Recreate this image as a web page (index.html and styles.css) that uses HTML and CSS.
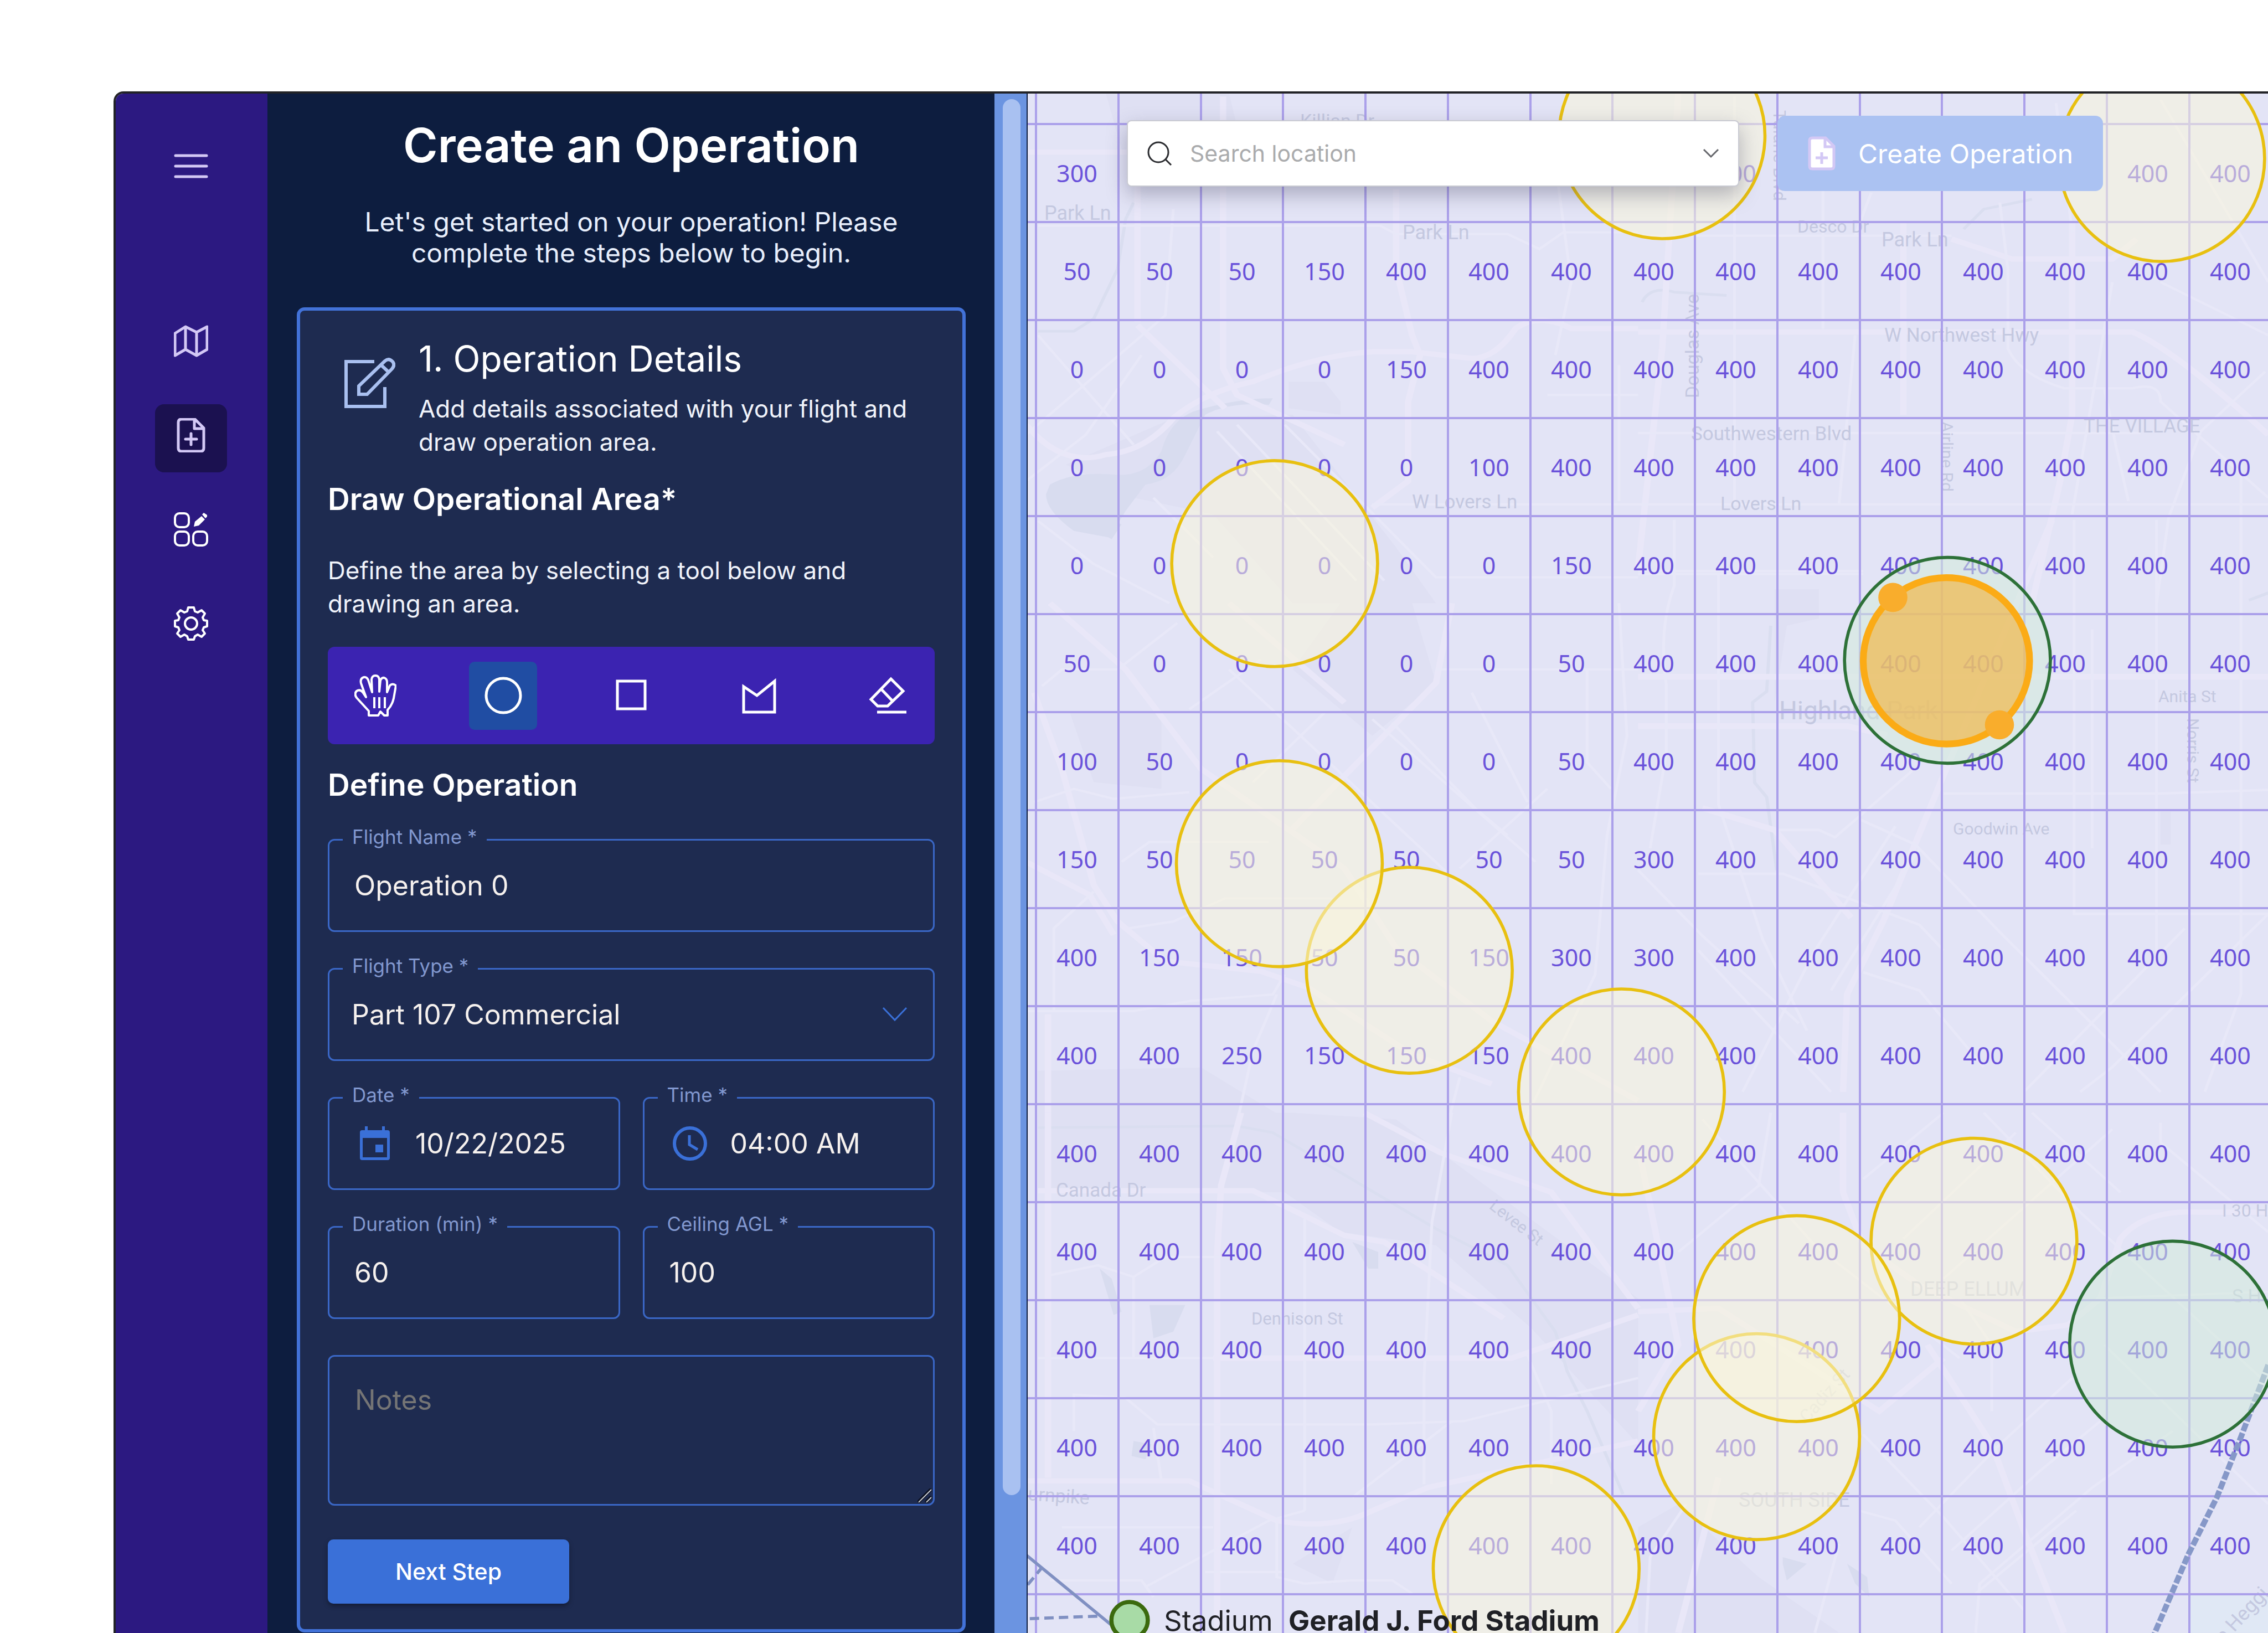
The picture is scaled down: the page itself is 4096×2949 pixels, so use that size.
FILE: index.html
```html
<!DOCTYPE html>
<html lang="en">
<head>
<meta charset="utf-8">
<title>Create an Operation</title>
<link rel="stylesheet" href="styles.css">
</head>
<body>
<div class="app">
  <nav class="sidebar" aria-label="Main">
    <button class="nav-item nav-menu" type="button" aria-label="Menu">
      <svg class="icon" viewBox="0 0 62 62"><path d="M3 12H59M3 31H59M3 50H59" stroke-width="5" stroke-linecap="round"/></svg>
    </button>
    <a class="nav-item" href="#map" aria-label="Map">
      <svg class="icon" viewBox="0 0 62 62"><path d="M2 17 21 5 41 15 60 5V46L41 57 21 46 2 57ZM21 5V46M41 15V57" stroke-width="5" stroke-linejoin="round"/></svg>
    </a>
    <a class="nav-item nav-active" href="#create" aria-label="Create operation">
      <svg class="icon" viewBox="0 0 62 62"><path d="M14 2H38L54 18V54Q54 60 48 60H14Q8 60 8 54V8Q8 2 14 2ZM37 3V19H53M31 28V48M21 38H41" stroke-width="5" stroke-linejoin="round" stroke-linecap="round"/></svg>
    </a>
    <a class="nav-item nav-bright" href="#dashboard" aria-label="Dashboard">
      <svg class="icon" viewBox="0 0 62 62"><g stroke-width="4"><rect x="2" y="2" width="25" height="25" rx="8"/><rect x="2" y="35" width="25" height="25" rx="8"/><rect x="35" y="35" width="25" height="25" rx="8"/></g><path class="solid" d="M36 26 38 17 50 7 56 13 45 24ZM51 4 54 1 60 5 60 8 57 11Z"/></svg>
    </a>
    <a class="nav-item nav-bright" href="#settings" aria-label="Settings">
      <svg class="icon" viewBox="0 0 62 62"><path d="M26 2H36L38 9 43 11 50 7 56 13 52 20 54 25 60 26V36L54 38 52 43 56 49 50 55 43 51 38 54 36 60H26L24 54 19 51 12 55 6 49 10 43 8 38 2 36V26L8 25 10 20 6 13 12 7 19 11 24 9Z" stroke-width="4" stroke-linejoin="round"/><circle cx="31" cy="31" r="11" stroke-width="4"/></svg>
    </a>
  </nav>

  <main class="panel">
    <h1 class="panel-title">Create an Operation</h1>
    <p class="panel-intro">Let's get started on your operation! Please<br>complete the steps below to begin.</p>

    <form class="card">
      <header class="step">
        <svg class="step-icon" viewBox="0 0 92 92"><path d="M54 7H3V88H73V53" stroke-width="6"/><path d="M26 66V51L73 6Q80 0 87 7 92 13 86 20L41 66ZM66 13 80 26" stroke-width="6"/></svg>
        <div>
          <h2 class="step-title">1. Operation Details</h2>
          <p class="text">Add details associated with your flight and draw operation area.</p>
        </div>
      </header>

      <h3 class="section-title">Draw Operational Area*</h3>
      <p class="text section-text">Define the area by selecting a tool below and drawing an area.</p>

      <div class="tools" role="toolbar" aria-label="Drawing tools">
        <button class="tool" type="button" aria-label="Pan">
          <svg viewBox="0 0 76 76"><path d="M26 74V66L4 42Q-1 35 4 30 10 26 15 32L21 41 12 16Q10 7 17 5 22 4 25 10L32 32 31 9Q32 2 38 2 44 2 45 9V31L47 11Q49 5 54 6 59 8 59 14V32L64 20Q69 15 75 20L71 43Q68 56 60 64V74H54L47 67 43 74ZM36 41V61M45 41V61M55 41V61" stroke-width="4" stroke-linejoin="round"/></svg>
        </button>
        <button class="tool tool-active" type="button" aria-label="Circle" aria-pressed="true">
          <svg viewBox="0 0 76 76"><circle cx="38" cy="38" r="31" stroke-width="5"/></svg>
        </button>
        <button class="tool" type="button" aria-label="Rectangle">
          <svg viewBox="0 0 76 76"><path d="M13 12H63V62H13Z" stroke-width="5"/></svg>
        </button>
        <button class="tool" type="button" aria-label="Polygon">
          <svg viewBox="0 0 76 76"><path d="M10 22V68H66V12L34 38Z" stroke-width="5"/></svg>
        </button>
        <button class="tool" type="button" aria-label="Erase">
          <svg viewBox="0 0 76 76"><path d="M44 8 66 30 38 57H20L8 45ZM26 26 47 48M19 68H72" stroke-width="5"/></svg>
        </button>
      </div>

      <h3 class="section-title">Define Operation</h3>

      <div class="fields">
        <div class="field wide">
          <label for="name">Flight Name *</label>
          <input id="name" type="text" value="Operation 0">
        </div>
        <div class="field wide">
          <label for="type">Flight Type *</label>
          <select id="type"><option>Part 107 Commercial</option></select>
          <svg class="field-arrow" viewBox="0 0 46 28"><path d="M2 2 23 24 44 2" stroke-width="3"/></svg>
        </div>
        <div class="field">
          <label for="date">Date *</label>
          <svg class="field-icon" viewBox="0 0 62 64"><path d="M8 8H54Q58 8 58 12V58Q58 62 54 62H8Q4 62 4 58V12Q4 8 8 8ZM9 22V57H53V22Z" fill-rule="evenodd" class="solid"/><path class="solid" d="M13 1H18V9H13ZM44 1H49V9H44ZM32 34H46V48H32Z"/></svg>
          <input id="date" type="text" value="10/22/2025">
        </div>
        <div class="field">
          <label for="time">Time *</label>
          <svg class="field-icon" viewBox="0 0 62 64"><circle cx="31" cy="32" r="28" stroke-width="6"/><path d="M30 17V34L45 43" stroke-width="5"/></svg>
          <input id="time" type="text" value="04:00 AM">
        </div>
        <div class="field">
          <label for="duration">Duration (min) *</label>
          <input id="duration" type="text" value="60">
        </div>
        <div class="field">
          <label for="ceiling">Ceiling AGL *</label>
          <input id="ceiling" type="text" value="100">
        </div>
        <div class="field notes wide">
          <textarea aria-label="Notes" placeholder="Notes"></textarea>
          <svg class="grip" viewBox="0 0 26 26"><path d="M1 25 25 1M15 25 25 15" stroke="#0b1020" stroke-width="6"/><path d="M2 25 25 2M16 25 25 16" stroke="#c9cbd2" stroke-width="2"/></svg>
        </div>
      </div>

      <button class="next" type="submit">Next Step</button>
    </form>
  </main>
  <div class="scroll-track"><div class="scroll-thumb"></div></div>

  <section class="map" aria-label="Airspace map">
    <svg class="map-canvas" viewBox="0 0 2240 2780" preserveAspectRatio="xMinYMin slice">
      <!-- Base map: parks, water and streets -->
      <g transform="scale(.939) translate(-1976 -180)">
        <g transform="translate(1950 160) scale(.7653 .6378)">
          <path class="park" d="M230 30H540L560 130 520 200H270ZM690 900H780L820 960V1000L690 980ZM130 1150 400 1010 700 1000 960 1400 1060 1568H700L500 1300 300 1250Z"/>
          <path class="water" d="M90 1210Q150 1170 250 1180 330 1190 370 1110 390 1020 450 990 560 950 650 950L640 970Q540 960 480 1000L430 1120Q400 1200 330 1210L280 1290 240 1370 150 1350Q80 1290 80 1240ZM220 1310 270 1330 245 1375 195 1340Z"/>
          <path class="water-line" d="M60 748H150L200 710 260 560 280 410 300 360"/>
          <path class="road major" d="M35 208H300L520 210M310 280V720M310 730 530 980M30 1030Q120 1160 230 1120 330 1110 400 1010 480 930 600 900 760 820 900 810H1000L1150 830Q1210 830 1260 740 1320 690 1400 740H1568M960 320V560L1000 760 1020 820 990 960V1200L900 1280M525 40V860L560 940 830 1090"/>
          <path class="road" d="M60 430H920L960 455H1240L1320 500 1380 450H1568M60 760 300 1090M400 380 380 700 30 1060M60 1320 200 1450 390 1568M680 1030 1060 1490H1568M900 1270H1568M1360 240 1400 600 1360 820M1340 940H1568M1520 850V1260M510 1050 860 1500M560 1030 930 1500M350 1250 500 1430M30 1200 180 1060 320 820"/>
        </g>
        <g transform="translate(3150 160) scale(.773 .6378)">
          <path class="water-line" d="M810 440 860 380 980 350M10 660Q30 610 90 630L220 640"/>
          <path class="road major" d="M100 30 60 800 0 1460M0 750H1230Q1330 800 1568 1060M1080 420V1000L1050 1200 980 1568M660 420V1000M780 470 930 530H1180L1240 470"/>
          <path class="road" d="M240 40V1270M460 160V740M0 460H780M0 1055H1250M0 1270H1568M0 1480H560M900 360 920 560V800Q950 880 1060 920H1230Q1300 900 1300 960L1568 1250M1300 600 1568 760M1560 870 1400 1050 1320 1310 1290 1568M1500 1150V1568M540 760 500 1270M1160 920 1190 1100 1220 1260M1180 600 1080 1300M1300 50 1568 600M1040 60 1080 450M580 330 540 460"/>
        </g>
        <g transform="translate(1950 1160) scale(.7653 .6378)">
          <path class="park" d="M60 1410 470 1400 700 1568H60ZM820 0 1000 0 1060 240 900 400 700 200ZM140 330H370V560L200 540Z"/>
          <path class="road major" d="M90 0 280 200 470 500 830 800 960 1040 1200 1260 1568 1500M50 270 120 500 200 850 260 960 380 1080 620 1110 740 1160 1000 1360 1200 1450M30 780 190 880 250 1000M1100 0 1060 240 880 460 700 680M85 1568V1240M830 300 540 0"/>
          <path class="road" d="M70 250 120 200H260L410 60M440 320 620 170M540 200 720 400 1130 860M270 780 340 720H640M290 980 400 960 530 890H800M30 1230H300L440 1200 650 1180 680 1120M900 350 1310 780M950 360 1160 620 1240 700M1060 200H1568M1440 200V480L1500 560M1150 270 1290 600M1520 0 1540 400 1490 700 1460 1120 1280 1568M1340 560 1120 800M780 330 600 540M660 1180 600 1350 560 1568M1090 1568 1120 1430M100 1230V980L200 870M50 600 150 560 250 590 440 570"/>
        </g>
        <g transform="translate(3150 1000) scale(.773 .7015)">
          <path class="park" d="M340 190H450V270L370 290 340 500ZM1300 800H1325V890H1300Z"/>
          <path class="water-line" d="M330 290 320 470 285 500 290 720 320 760 345 960M1520 220 1568 200"/>
          <path class="road major" d="M1030 0 760 700 610 1100 520 1300 510 1568M0 565H520L620 590M160 790 340 850 530 1090M0 430H1568"/>
          <path class="road" d="M90 0V180Q50 300 70 450V640L30 900M0 140H560M760 750H1300L1568 740M1085 0V1080H1568M1500 0V1300L1410 1568M1290 0V1200M200 150V780L310 1150 420 1400M550 820 690 890 900 1130 1300 1568M0 960 160 1140 400 1380M150 970H360L700 1110 760 1180M340 850H450L490 870 690 680M640 840 440 1180 260 1568M700 900 480 1290M1568 1080 1180 1500 1100 1568M1360 1120 960 1568M560 1240 700 1290 860 1500M150 1180 480 1568M1130 300V900"/>
        </g>
        <g transform="translate(1950 2140) scale(.7653 .6378)">
          <path class="park" d="M60 0H700L960 20 1568 560V1000L1300 650 1060 400 820 360 680 240 60 230ZM700 1360 850 1250 800 1420Z"/>
          <path class="water" d="M340 580H430L400 660 350 680ZM215 470 245 500 270 600 250 610ZM300 990 345 1000 330 1045 295 1035ZM850 390 915 420V470H890Z"/>
          <path class="water-line" d="M60 45 560 40 650 60 1060 350 1240 460 1360 660 1390 780 1440 900 1530 1150"/>
          <path class="road major" d="M85 0V1100M570 0 520 220 510 430V1568M60 235H600L830 370 930 390 1230 620M30 1110H440L660 1230Q800 1260 900 1200L1040 1130 1568 990M880 0 1070 120 1350 240 1568 590M1568 610 1250 740H500"/>
          <path class="road" d="M1100 0 1050 330 1030 800V1120M90 490 210 460 300 495 380 435H520M300 495V740M60 740H500M150 960V850L280 860 360 940H900L1130 930 1568 800M350 950 370 1110M730 320V1200M120 1250H500M90 1410H320L350 1460M660 1230V1400L730 1420 850 1410H950L1000 1450M330 1430 640 1230 730 1200M1040 860H1280M1290 730 1350 900V1120M1100 930 850 1160M480 1385H680"/>
        </g>
        <g transform="translate(3150 2140) scale(.773 .6378)">
          <path class="park" d="M0 1250 100 1180 300 1400 500 1568H0Z"/>
          <path class="water" d="M360 1340 420 1360 370 1410 360 1360ZM520 1360 570 1400 575 1460 540 1420Z"/>
          <path class="road major" d="M510 0V240L560 400 700 520 940 660 1070 640 1150 560 1200 380Q1260 290 1400 300H1568M0 600 200 590 600 900 760 740M720 700 880 1000 960 1260 1060 1568M200 1100 100 1568M0 100 100 700 0 900"/>
          <path class="road" d="M330 0 300 220 100 420M160 20 440 400 800 740M560 200 760 0M660 380 940 60M760 500 1180 50M860 0 1100 300 1568 820M1300 30V90L1568 360M980 0 1200 240M1140 560 1568 540M700 1250 900 1000 1080 800M780 1320 1000 1080 1150 930M840 1450 1090 1200M840 1568 850 1420 1130 1130 1330 960M560 970 760 1220 960 1500M1160 700 1568 1180M550 1200 640 1230 780 1420M500 1300 440 1568M880 900V700L800 560M20 1568 30 1340 120 1180"/>
          <path class="plot" d="M1371 1452H1568V1568H1371Z"/>
        </g>
      </g>

      <g id="labels"></g>
      <g id="grid"></g>

      <!-- Flight areas -->
      <g transform="scale(.939) translate(-1976 -180)">
        <path class="wire wavy" d="M4362 2625 4309 2765 4263 2880 4209 2988 4143 3142"/>
        <g class="advisory">
          <circle cx="2451" cy="1084" r="198"/>
          <circle cx="2710" cy="1866" r="198"/>
          <circle cx="2460" cy="1661" r="198"/>
          <circle cx="3118" cy="2100" r="198"/>
          <circle cx="3196" cy="261" r="198"/>
          <circle cx="4157" cy="305" r="198"/>
          <circle cx="3378" cy="2763" r="198"/>
          <circle cx="3796" cy="2387" r="198"/>
          <circle cx="3455" cy="2536" r="198"/>
          <circle cx="2954" cy="3017" r="198"/>
        </g>
        <path class="wire" d="M1970 2988 2150 3136"/>
        <path class="wire dashed" d="M1976 3048 2004 3014M1980 3113 2115 3108"/>
        <g class="approved">
          <circle cx="4178" cy="2585" r="198"/>
          <circle cx="3745" cy="1270" r="198"/>
        </g>
        <g class="drawing">
          <circle class="drawing-area" cx="3743" cy="1271" r="160"/>
          <circle class="handle" cx="3640" cy="1149" r="28"/>
          <circle class="handle" cx="3845" cy="1394" r="28"/>
        </g>
        <circle class="place" cx="2172" cy="3116" r="35"/>
      </g>
      <text class="place-kind" x="246" y="2776">Stadium</text>
      <text class="place-name" x="471" y="2776">Gerald J. Ford Stadium</text>
    </svg>

    <div class="map-bar">
      <label class="search">
        <svg class="search-icon" viewBox="0 0 46 46"><circle cx="21" cy="21" r="18" stroke-width="3"/><path d="M34 34 44 44" stroke-width="3"/></svg>
        <input type="text" aria-label="Search location" placeholder="Search location">
        <svg class="search-arrow" viewBox="0 0 30 18"><path d="M2 2 15 15 28 2" stroke-width="3"/></svg>
      </label>
      <button class="create" type="button">
        <svg class="create-icon" viewBox="0 0 50 62"><path d="M8 3H32L47 18V54Q47 59 42 59H8Q3 59 3 54V8Q3 3 8 3Z" fill="#fff" stroke-width="5"/><path d="M31 4V19H46M25 29V50M14 39H36" stroke-width="5"/></svg>
        Create Operation
      </button>
    </div>
  </section>
</div>
<script src="map.js"></script>
</body>
</html>
```
FILE: styles.css
```css
* { box-sizing: border-box; }

body {
  margin: 0;
  background: #fff;
  color: #fff;
  font-family: Inter, "Liberation Sans", sans-serif;
}

h1, h2, h3, p { margin: 0; }

button, input, select, textarea {
  font: inherit;
  color: inherit;
  border: 0;
  padding: 0;
  background: none;
}

svg { fill: none; stroke: currentColor; display: block; }
.solid { fill: currentColor; stroke: none; }

.app {
  display: flex;
  height: calc(100vh - 165px);
  margin: 165px 0 0 205px;
  border: 4px solid #222327;
  border-width: 4px 0 0 4px;
  border-radius: 18px 0 0 0;
  overflow: hidden;
}

/* Sidebar */
.sidebar {
  flex: 0 0 274px;
  display: flex;
  flex-direction: column;
  align-items: center;
  gap: 47px;
  padding: 75px 2px 0 0;
  background: #2c1981;
  color: #d3c8f5;
}
.nav-item {
  display: flex;
  align-items: center;
  justify-content: center;
  width: 130px;
  height: 123px;
  padding-bottom: 12px;
  border-radius: 16px;
  color: inherit;
}
.nav-menu { margin-bottom: 146px; }
.nav-active { background: #1b1150; }
.nav-bright { color: #fff; }
.icon { width: 62px; height: 62px; }

/* Panel */
.panel {
  flex: 0 0 1313px;
  min-width: 0;
  padding: 44px 52px 0 53px;
  background: #0d1d3f;
}
.panel-title {
  font-size: 85px;
  line-height: 100px;
  font-weight: 600;
  text-align: center;
}
.panel-intro {
  margin-top: 60px;
  font-size: 48px;
  line-height: 56px;
  text-align: center;
  color: #e8effc;
}
.card {
  margin-top: 70px;
  padding: 47px 50px 46px;
  border: 6px solid #4272d8;
  border-radius: 14px;
  background: #1e2b50;
}
.step { display: flex; gap: 42px; padding-left: 30px; }
.step-icon { flex: none; width: 92px; height: 92px; margin-top: 38px; color: #a9c0f0; }
.step-title { font-size: 64px; line-height: 80px; font-weight: 400; }
.text { font-size: 44px; line-height: 60px; color: #f0f3fa; }
.step .text { margin-top: 20px; }
.section-title { margin-top: 39px; font-size: 55px; line-height: 68px; font-weight: 600; }
.section-text { margin-top: 65px; }

.tools {
  display: flex;
  justify-content: space-between;
  align-items: center;
  height: 176px;
  margin-top: 48px;
  padding: 0 24px;
  border-radius: 12px;
  background: #3b23b1;
}
.tool {
  display: flex;
  align-items: center;
  justify-content: center;
  width: 123px;
  height: 123px;
  border-radius: 10px;
}
.tool svg { width: 76px; height: 76px; }
.tool-active { background: #204da3; }

.fields {
  display: grid;
  grid-template-columns: repeat(2, minmax(0, 1fr));
  gap: 65px 41px;
  margin-top: 64px;
}
.field {
  position: relative;
  display: flex;
  align-items: center;
  height: 168px;
  border: 3px solid #3a67c6;
  border-radius: 12px;
  color: #f6f1ee;
}
.wide { grid-column: 1 / -1; }
.field label {
  position: absolute;
  top: -27px;
  left: 24px;
  padding: 0 17px;
  background: #1e2b50;
  color: #8298cf;
  font-size: 35px;
  line-height: 40px;
}
.field input, .field select {
  flex: 1;
  min-width: 0;
  height: 100%;
  padding-left: 45px;
  font-size: 50px;
}
.field select { appearance: none; padding-left: 40px; }
.field-arrow { position: absolute; right: 46px; width: 46px; height: 28px; color: #3a70d8; pointer-events: none; }
.field-icon { flex: none; width: 62px; height: 64px; margin-left: 51px; color: #3a70d8; }
.field-icon + input { padding-left: 42px; }
.notes { height: 272px; }
.notes textarea {
  flex: 1;
  min-width: 0;
  height: 100%;
  padding: 48px 46px;
  font-size: 50px;
  line-height: 60px;
  resize: none;
}
.notes textarea::placeholder { color: #757575; }
.grip { position: absolute; right: 2px; bottom: 2px; width: 26px; height: 26px; }

.next {
  display: block;
  width: 436px;
  height: 116px;
  margin-top: 61px;
  border-radius: 10px;
  background: #3a70d8;
  box-shadow: 0 4px 8px rgba(0, 0, 0, .35);
  font-size: 41px;
  font-weight: 500;
}

.scroll-track {
  flex: 0 0 60px;
  padding: 10px 11px 0 15px;
  border-right: 2px solid #0d1d3f;
  background: #6b94e1;
}
.scroll-thumb { height: 91%; border-radius: 16px; background: #a9c1f1; }

/* Map */
.map { position: relative; flex: 1; min-width: 0; overflow: hidden; background: #e3e4f6; }
.map-canvas { position: absolute; inset: 0; width: 100%; height: 100%; }
.park { fill: #dfe0f3; stroke: none; }
.water { fill: #d8dcef; stroke: none; }
.plot { fill: #e0e8f5; stroke: none; }
.water-line { stroke: #dadef0; stroke-width: 8px; }
.road { stroke: #e8e8f8; stroke-width: 7px; }
.major { stroke: #e9e7f8; stroke-width: 16px; }
.street { fill: #c4c8e0; stroke: none; font-family: Roboto, sans-serif; }
.grid-line { stroke: #aba0ea; stroke-width: 4px; }
.limit {
  fill: #6a52da;
  stroke: none;
  font-family: "Noto Sans", sans-serif;
  font-size: 43px;
  text-anchor: middle;
}
.advisory { fill: rgba(249, 246, 219, .55); stroke: #e8c010; stroke-width: 6px; }
.approved { fill: rgba(212, 235, 219, .55); stroke: #2d7138; stroke-width: 6px; }
.drawing { fill: #f9ad2c; stroke: none; }
.drawing .drawing-area { fill: rgba(240, 186, 80, .72); stroke: #fbab16; stroke-width: 13px; }
.wire { stroke: #8090c2; stroke-width: 6px; }
.dashed { stroke-dasharray: 18 10; }
.wavy { stroke: #8698c8; stroke-width: 11px; stroke-dasharray: 16 4; }
.place { fill: #a8dba6; stroke: #3b6a0e; stroke-width: 8px; }
.place-kind, .place-name { fill: #1f2025; stroke: none; font-size: 51px; }
.place-name { font-weight: 700; }

.map-bar {
  position: absolute;
  top: 40px;
  left: 179px;
  display: flex;
  align-items: center;
  gap: 69px;
}
.search {
  display: flex;
  align-items: center;
  width: 1106px;
  height: 120px;
  padding: 0 34px;
  border: 2px solid #c9cad2;
  border-radius: 8px;
  background: #fff;
  box-shadow: 0 14px 36px rgba(60, 60, 90, .35);
  color: #2b2c30;
}
.search-icon { width: 46px; height: 46px; }
.search input { flex: 1; margin-left: 32px; font-size: 41px; }
.search input::placeholder { color: #aaabad; }
.search-arrow { width: 30px; height: 18px; color: #66676c; }
.create {
  display: flex;
  align-items: center;
  gap: 41px;
  width: 588px;
  height: 136px;
  padding-left: 55px;
  border-radius: 14px;
  background: #abc2f2;
  font-size: 48px;
  white-space: nowrap;
}
.create-icon { flex: none; width: 50px; height: 62px; stroke: #d3c8f5; }
```
FILE: map.js
```js
const NS = "http://www.w3.org/2000/svg";
const grid = document.getElementById("grid");
const labels = document.getElementById("labels");

function add(parent, tag, attrs, text) {
  const node = document.createElementNS(NS, tag);
  for (const key in attrs) node.setAttribute(key, attrs[key]);
  if (text !== undefined) node.textContent = text;
  parent.appendChild(node);
}

// Altitude limits in feet; cells left out of a row are 400
const limits = [
  [300], [50, 50, 50, 150], [0, 0, 0, 0, 150], [0, 0, 0, 0, 0, 100],
  [0, 0, 0, 0, 0, 0, 150], [50, 0, 0, 0, 0, 0, 50], [100, 50, 0, 0, 0, 0, 50],
  [150, 50, 50, 50, 50, 50, 50, 300], [400, 150, 150, 50, 50, 150, 300, 300],
  [400, 400, 250, 150, 150, 150], [], [], [], [], []
];
const cellWidth = 148.75, cellHeight = 177, left = 15, top0 = 55;

// Cells of the first row that lie behind the search box and the button
const covered = [1, 2, 3, 4, 5, 6, 7, 9, 10, 11, 12];

for (let c = 0; c < 15; c++) {
  const x = Math.round(left + c * cellWidth);
  add(grid, "path", { class: "grid-line", d: `M${x} 0V2780` });
}
for (let r = 0; r < 16; r++) {
  add(grid, "path", { class: "grid-line", d: `M0 ${top0 + r * cellHeight}H2240` });
}
limits.forEach((row, r) => {
  for (let c = 0; c < 15; c++) {
    if (r === 0 && covered.includes(c)) continue;
    const x = Math.round(left + (c + 0.5) * cellWidth);
    add(grid, "text", { class: "limit", x, y: top0 + r * cellHeight + 105 }, row[c] ?? 400);
  }
});

// text, x, y, size, rotation
[
  ["Park Ln", 30, 228, 36], ["Park Ln", 677, 263, 36], ["Killian Dr", 492, 61, 34],
  ["Desco Dr", 1390, 251, 32], ["Park Ln", 1542, 276, 36], ["Tulane Blvd", 1347, 30, 32, 90],
  ["W Northwest Hwy", 1547, 448, 35], ["Southwestern Blvd", 1198, 626, 35],
  ["W Lovers Ln", 694, 749, 35], ["Lovers Ln", 1251, 752, 34],
  ["THE VILLAGE", 1907, 612, 35], ["Douglas Ave", 1212, 550, 34, -90],
  ["Airline Rd", 1650, 592, 30, 90], ["Highland Park", 1357, 1130, 46],
  ["Anita St", 2042, 1099, 30], ["Norris St", 2094, 1128, 30, 90],
  ["Goodwin Ave", 1671, 1338, 30], ["Canada Dr", 51, 1992, 35],
  ["Levee St", 832, 2012, 30, 38], ["Dennison St", 404, 2223, 31],
  ["urnpike", 0, 2540, 34, 4], ["I 30 H", 2157, 2028, 32], ["S H", 2175, 2183, 34],
  ["DEEP ELLUM", 1594, 2171, 36], ["Cadiz St", 1408, 2402, 32, -48],
  ["SOUTH SIDE", 1284, 2552, 36], ["e Heggi", 2160, 2800, 36, -47]
].forEach(([text, x, y, size, turn = 0]) => {
  add(labels, "text", {
    class: "street", "font-size": size, transform: `translate(${x} ${y}) rotate(${turn})`
  }, text);
});
```
